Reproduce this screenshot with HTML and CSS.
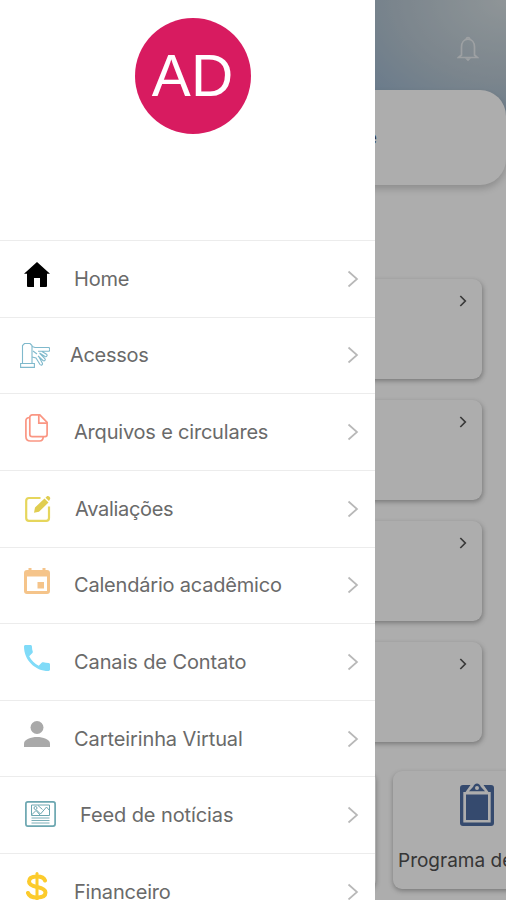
FILE: index.html
```html
<!DOCTYPE html>
<html lang="pt-BR">

<head>
	<meta charset="UTF-8">
	<meta name="viewport" content="width=device-width, initial-scale=1.0">
	<title>Menu</title>
	<link rel="stylesheet" href="styles.css">
</head>

<body>
	<main class="page">
		<header class="topbar">
			<svg class="bell" viewBox="0 0 22 26" fill="none" stroke="#fff" stroke-width="1.700">
				<path d="M1.500 21.500L4.500 19v-8C4.500 6.500 7 3.200 11 3.200s6.500 3.300 6.500 7.800v8l3 2.500z" />
				<path d="M9.300 3.200a1.700 1.700 0 0 1 3.400 0" />
				<path d="M8 22.300h6l-3 3z" fill="#fff" stroke="none" />
			</svg>
		</header>
		<section class="greeting">e</section>

		<section class="cards">
			<div class="card"><svg viewBox="0 0 8 12"><path d="M1.300 1l5 5-5 5" /></svg></div>
			<div class="card"><svg viewBox="0 0 8 12"><path d="M1.300 1l5 5-5 5" /></svg></div>
			<div class="card"><svg viewBox="0 0 8 12"><path d="M1.300 1l5 5-5 5" /></svg></div>
			<div class="card"><svg viewBox="0 0 8 12"><path d="M1.300 1l5 5-5 5" /></svg></div>
		</section>

		<section class="tiles">
			<div class="tile"></div>
			<div class="tile">
				<svg viewBox="0 0 34 44" fill="#4e6da2">
					<path fill-rule="evenodd" d="M3 2h7.500L5.500 9H28.500L23.500 2H31a3 3 0 0 1 3 3v35a3 3 0 0 1-3 3H3a3 3 0 0 1-3-3V5a3 3 0 0 1 3-3zM3.300 9v30.500h27.400V9z" />
					<path d="M6 11.500h22V37H6z" />
					<path fill-rule="evenodd" d="M9 8.200l4.200-4.400C13.800 1.700 15.200.4 17 .4s3.200 1.300 3.800 3.400L25 8.200zM17 3a2 2 0 1 0 0 4 2 2 0 0 0 0-4z" />
				</svg>
				<span>Programa de</span>
			</div>
		</section>
	</main>

	<div class="scrim"></div>

	<aside class="drawer">
		<div class="profile">
			<div class="avatar">AD</div>
		</div>

		<nav class="menu">
			<a class="item">
				<svg class="icon home" viewBox="0 0 26 25"><path d="M13 0L26 11.800h-3V24q0 1-1 1h-6v-9h-6v9H4q-1 0-1-1V11.800H0z" /></svg>
				<span>Home</span>
				<svg class="arrow" viewBox="0 0 12 18"><path d="M1.500 1.500L10 9l-8.500 7.500" /></svg>
			</a>
			<a class="item access">
				<svg class="icon" viewBox="0 0 30 25" fill="none" stroke="#7fb9cc" stroke-width="1.100">
					<path d="M2.500 20.500V2.500l2-2H10l2 2v18M.6 20.500h13.800v3.900H.6z" />
					<path d="M12 3.500l3 1h14c1 1 1 3 0 3.800H18M12 14l4 1 4 6.500c1.200 1.300 3 .3 2.400-1.200L18.500 13M18 13l5 4.500c1.500 1 3-.6 1.800-2L19.500 10M19.500 10l5.500 3.500c1.600.8 2.800-1.200 1.500-2.300L22 8.500M13 8l4 3" />
				</svg>
				<span>Acessos</span>
				<svg class="arrow" viewBox="0 0 12 18"><path d="M1.500 1.500L10 9l-8.500 7.500" /></svg>
			</a>
			<a class="item">
				<svg class="icon files" viewBox="0 0 23 28" fill="none" stroke="#fa9683" stroke-width="1.700">
					<path d="M7.200.9h7.600l7.300 7.500v12.200a2 2 0 0 1-2 2H7.200a2.400 2.400 0 0 1-2.400-2.400V3.300A2.400 2.400 0 0 1 7.200.9z" />
					<path d="M13.800 1v8.200H22M4.800 3.500C2.300 3.500.9 4.500.9 6.800v15.700c0 2.700 1.800 4.500 4.500 4.500h9.100c2.300 0 3.700-1.500 3.700-4.200" />
				</svg>
				<span>Arquivos e circulares</span>
				<svg class="arrow" viewBox="0 0 12 18"><path d="M1.500 1.500L10 9l-8.500 7.500" /></svg>
			</a>
			<a class="item review">
				<svg class="icon" viewBox="0 0 26 26">
					<path d="M15.500 2H4a2.800 2.800 0 0 0-2.800 2.800V22A2.800 2.800 0 0 0 4 24.800h17.200A2.800 2.800 0 0 0 24 22V10.500" fill="none" stroke="#e6d65c" stroke-width="2.200" />
					<path d="M10 11.500L19.500 2.500l4 4L14 15.800l-5 1zM20.500 1.700l1.200-1.200c1-.8 2-.5 2.800.3s1.100 1.700.3 2.700L24 5z" fill="#e0cd50" />
				</svg>
				<span>Avaliações</span>
				<svg class="arrow" viewBox="0 0 12 18"><path d="M1.500 1.500L10 9l-8.500 7.500" /></svg>
			</a>
			<a class="item">
				<svg class="icon calendar" viewBox="0 0 26 26">
					<path fill="#f5c48a" fill-rule="evenodd" d="M4.500 0h3v2h11V0h3v2H23a3 3 0 0 1 3 3v18a3 3 0 0 1-3 3H3a3 3 0 0 1-3-3V5a3 3 0 0 1 3-3h1.500zM3 8.500V23h20V8.500zM13.500 14H20v6.500h-6.500z" />
				</svg>
				<span>Calendário acadêmico</span>
				<svg class="arrow" viewBox="0 0 12 18"><path d="M1.500 1.500L10 9l-8.500 7.500" /></svg>
			</a>
			<a class="item contact">
				<svg class="icon phone" viewBox="3 3 18 18">
					<path fill="#80dbf8" d="M6.620 10.790c1.440 2.830 3.760 5.140 6.590 6.590l2.200-2.200c.27-.27.670-.36 1.020-.24 1.120.37 2.330.57 3.570.57.550 0 1 .45 1 1V20c0 .55-.45 1-1 1-9.390 0-17-7.610-17-17 0-.55.450-1 1-1h3.500c.55 0 1 .45 1 1 0 1.250.2 2.450.57 3.570.11.350.03.740-.25 1.020z" />
				</svg>
				<span>Canais de Contato</span>
				<svg class="arrow" viewBox="0 0 12 18"><path d="M1.500 1.500L10 9l-8.500 7.500" /></svg>
			</a>
			<a class="item card-id">
				<svg class="icon person" viewBox="0 0 26 26" fill="#a9a9a9">
					<circle cx="13" cy="6.500" r="6.500" />
					<path d="M0 26v-3.500C0 18.500 7 16 13 16s13 2.500 13 6.500V26z" />
				</svg>
				<span>Carteirinha Virtual</span>
				<svg class="arrow" viewBox="0 0 12 18"><path d="M1.500 1.500L10 9l-8.500 7.500" /></svg>
			</a>
			<a class="item feed">
				<svg class="icon" viewBox="0 0 31 26" fill="none" stroke="#6ba6b0">
					<rect x=".9" y=".9" width="29.200" height="24.200" rx="2" stroke-width="1.700" />
					<path d="M6.500 4h18v10.500h-18zM6.500 14l5-5 4 4 6-7 3 3.500M13 4.500l4.500 4M11.500 10l3.500 4" />
					<circle cx="10.500" cy="7" r="1.500" />
					<path d="M6.500 17h18M6.500 19.500h18M6.500 22h18" stroke-width=".9" />
				</svg>
				<span>Feed de notícias</span>
				<svg class="arrow" viewBox="0 0 12 18"><path d="M1.500 1.500L10 9l-8.500 7.500" /></svg>
			</a>
			<a class="item">
				<svg class="icon money" viewBox="0 0 22 30" fill="none" stroke="#fccb2c" stroke-width="4" stroke-linecap="round">
					<path d="M19 8.500C18 5.500 15 4.500 11 4.500c-4.500 0-8 1.500-8 5s3.500 4.600 8 5.500 8.500 2 8.500 5.500-4 5-8.500 5-8-1.500-9-4.500" />
					<path d="M11 1.500v27" stroke-width="3" />
				</svg>
				<span>Financeiro</span>
				<svg class="arrow" viewBox="0 0 12 18"><path d="M1.500 1.500L10 9l-8.500 7.500" /></svg>
			</a>
		</nav>
	</aside>
</body>

</html>
```

FILE: styles.css
```css
* {
	box-sizing: border-box;
}

body {
	position: relative;
	margin: 0;
	height: 900px;
	overflow: hidden;
	background-color: #fff;
	font-family: Inter, "Liberation Sans", sans-serif;
}

.page {
	height: 900px;
	overflow: hidden;
}

.topbar {
	display: flex;
	justify-content: flex-end;
	height: 120px;
	padding: 36px 27px 0 0;
	background: radial-gradient(ellipse 220px 160px at 506px 0, #d3dce0 0%, #b6c5d0 50%, #8fadcb 100%);
}

.bell {
	width: 22px;
	height: 26px;
	opacity: 0.65;
}

.greeting {
	height: 95px;
	margin-top: -30px;
	padding: 38px 129px 0 0;
	border-radius: 0 26px 26px 0;
	background-color: #fff;
	box-shadow: 0 4px 7px rgba(0, 0, 0, 0.18);
	color: #444;
	font-size: 17px;
	text-align: right;
}

.cards {
	display: flex;
	flex-direction: column;
	gap: 21px;
	padding: 94px 24px 0;
}

.card {
	display: flex;
	justify-content: flex-end;
	height: 100px;
	padding: 16px 15px 0 0;
	border-radius: 9px;
	background-color: #fff;
	box-shadow: 1px 2px 5px rgba(0, 0, 0, 0.3);
}

.card svg {
	width: 8px;
	height: 12px;
	fill: none;
	stroke: #555;
	stroke-width: 1.7;
}

.tiles {
	display: flex;
	gap: 17px;
	padding: 29px 0 0 208px;
}

.tile {
	flex: none;
	display: flex;
	flex-direction: column;
	align-items: center;
	width: 168px;
	height: 118px;
	border-radius: 9px;
	background-color: #fff;
	box-shadow: 0 2px 5px rgba(0, 0, 0, 0.3);
}

.tile svg {
	width: 34px;
	height: 44px;
	margin-top: 12px;
}

.tile span {
	align-self: flex-start;
	margin: 22px 0 0 5px;
	color: #505050;
	font-size: 19px;
	line-height: 24px;
	white-space: nowrap;
}

.scrim {
	position: absolute;
	inset: 0;
	background-color: rgba(0, 0, 0, 0.32);
}

/* Drawer */
.drawer {
	position: absolute;
	top: 0;
	left: 0;
	width: 375px;
	height: 900px;
	overflow: hidden;
	background-color: #fff;
}

.profile {
	height: 240px;
	padding-top: 17.5px;
}

.avatar {
	width: 116px;
	height: 116px;
	margin-left: 134.5px;
	border-radius: 50%;
	background-color: #d81b60;
	color: #fff;
	font-family: "Liberation Sans", Arial, sans-serif;
	font-size: 58.5px;
	line-height: 115px;
	text-align: center;
}

.item {
	display: grid;
	grid-template-columns: 50px 1fr 12px;
	align-items: center;
	height: 76.65px;
	padding: 0 16px 0 24px;
	border-top: 1px solid #ececec;
	color: #6a6a6a;
	font-size: 20px;
	letter-spacing: -0.2px;
}

.item span {
	white-space: nowrap;
}

.icon {
	width: 26px;
	height: 26px;
	margin-bottom: 9px;
}

.icon.home {
	height: 25px;
}

.arrow {
	width: 12px;
	height: 18px;
	fill: none;
	stroke: #b8b8b8;
	stroke-width: 1.7;
}

.access {
	padding-left: 20px;
	letter-spacing: -0.3px;
}

.access .icon {
	width: 30px;
	height: 25px;
	margin-bottom: 0;
}

.icon.files {
	width: 23px;
	height: 28px;
	margin-left: 1px;
}

.review {
	padding-left: 25px;
	letter-spacing: -0.3px;
}

.review .icon {
	margin-bottom: 0;
}

.contact,
.card-id,
.feed {
	letter-spacing: -0.1px;
}

.feed {
	grid-template-columns: 55px 1fr 12px;
	padding-left: 25px;
}

.feed .icon {
	width: 31px;
	margin-bottom: 2px;
}

.icon.money {
	width: 22px;
	height: 30px;
	margin-left: 2px;
}
```
